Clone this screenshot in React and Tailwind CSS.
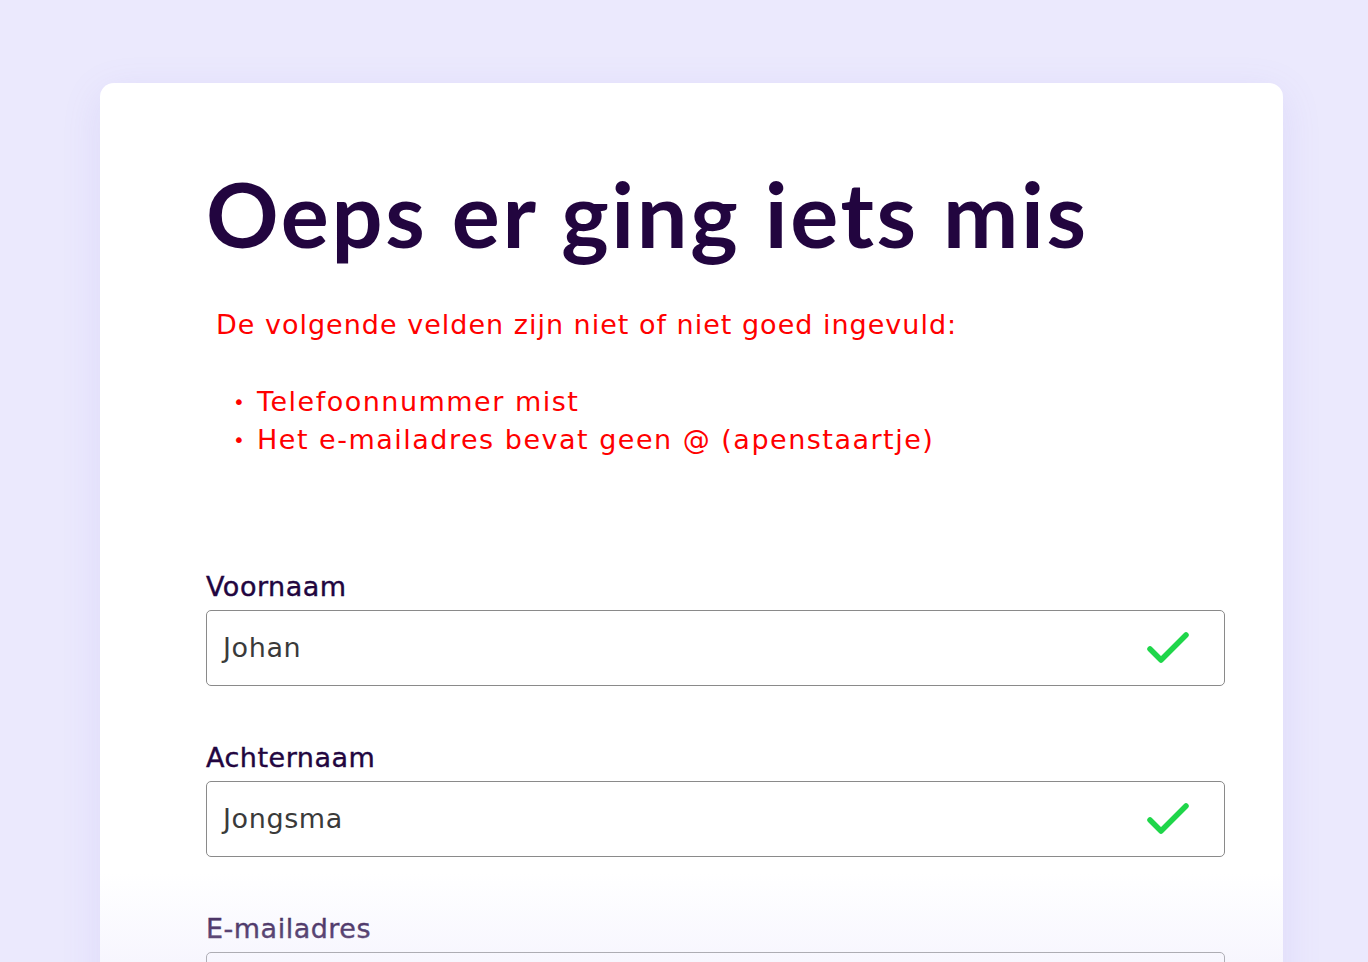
import React from 'react';

const fields = [
    { label: 'Voornaam', value: 'Johan', valid: true },
    { label: 'Achternaam', value: 'Jongsma', valid: true },
    { label: 'E-mailadres', value: '', valid: false },
];

const errors = [
    'Telefoonnummer mist',
    'Het e-mailadres bevat geen @ (apenstaartje)',
];

const Check = () => (
    <svg width="44" height="34" viewBox="0 0 44 34" fill="none">
        <path d="M4 18 L15 29 L40 4" stroke="#1fd64a" strokeWidth="5.5" strokeLinecap="round" strokeLinejoin="round" />
    </svg>
);

const Field = ({ label, value, valid }) => (
    <div className="flex flex-col">
        <label className="text-[27px] leading-[32px] text-[#22053f] tracking-[0.5px] [-webkit-text-stroke:0.4px_#22053f]">{label}</label>
        <div className="mt-[7px] h-[76px] w-[1019px] rounded-[5px] border border-[#8a8a8a] bg-white flex items-center justify-between pl-[16px] pr-[34px]">
            <span className="text-[27px] text-[#3a3a3a] tracking-[0.6px]">{value}</span>
            {valid && <Check />}
        </div>
    </div>
);

export default function App() {
    return (
        <div
            className="min-h-[962px] h-[962px] overflow-hidden bg-[#ebe9fd] pt-[83px] pl-[100px]"
            style={{ fontFamily: '"DejaVu Sans", "Open Sans", sans-serif' }}
        >
            <div className="relative w-[1183px] h-[1000px] bg-white rounded-[14px] shadow-[0_10px_40px_rgba(120,110,220,0.12)] pl-[106px] pt-[75px]">
                {/* Title */}
                <h1
                    className="text-[90px] leading-[110px] font-bold text-[#22053f] tracking-[2.6px]"
                    style={{ fontFamily: 'Lato, "Open Sans", sans-serif' }}
                >
                    Oeps er ging iets mis
                </h1>

                {/* Error summary */}
                <div className="mt-[38px] pl-[10px] text-[red] text-[27px] leading-[38px] tracking-[1px]">
                    <p>De volgende velden zijn niet of niet goed ingevuld:</p>
                    <ul className="mt-[39px] pl-[17px] tracking-[1.5px]">
                        {errors.map((e) => (
                            <li key={e} className="flex items-center">
                                <span className="w-[24px] text-[20px]">•</span>
                                <span>{e}</span>
                            </li>
                        ))}
                    </ul>
                </div>

                {/* Form */}
                <div className="mt-[112px] flex flex-col gap-[56px]">
                    {fields.map((f) => (
                        <Field key={f.label} {...f} />
                    ))}
                </div>

                {/* Fade at the bottom of the card */}
                <div className="absolute left-0 right-0 top-[790px] h-[220px] rounded-b-[14px] bg-gradient-to-b from-[#ebe9fd00] to-[#ebe9fd] pointer-events-none" />
            </div>
        </div>
    );
}
